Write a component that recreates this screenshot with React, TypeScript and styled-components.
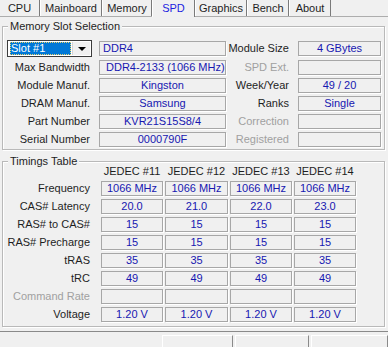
import React from 'react'
import styled, { createGlobalStyle } from 'styled-components'

const GlobalStyle = createGlobalStyle`
  html, body {
    margin: 0;
    padding: 0;
    background: #f0f0f0;
  }
  body {
    font-family: "Liberation Sans", Arial, sans-serif;
    font-size: 11px;
    color: #1e1e1e;
  }
`

const VALUE = '#1717b0'
const DIM = '#a0a0a0'

const tabs = [
  { name: 'CPU', width: 40 },
  { name: 'Mainboard', width: 62 },
  { name: 'Memory', width: 50 },
  { name: 'SPD', width: 43 },
  { name: 'Graphics', width: 52 },
  { name: 'Bench', width: 42 },
  { name: 'About', width: 42 },
]

const slotRows = [
  { label: 'Max Bandwidth', value: 'DDR4-2133 (1066 MHz)', align: 'left', pad: 6, rlabel: 'SPD Ext.', rdim: true, rvalue: '' },
  { label: 'Module Manuf.', value: 'Kingston', rlabel: 'Week/Year', rvalue: '49 / 20' },
  { label: 'DRAM Manuf.', value: 'Samsung', rlabel: 'Ranks', rvalue: 'Single' },
  { label: 'Part Number', value: 'KVR21S15S8/4', rlabel: 'Correction', rdim: true, rvalue: '' },
  { label: 'Serial Number', value: '0000790F', rlabel: 'Registered', rdim: true, rvalue: '' },
]

const timings = [
  { label: 'Frequency', values: ['1066 MHz', '1066 MHz', '1066 MHz', '1066 MHz'] },
  { label: 'CAS# Latency', values: ['20.0', '21.0', '22.0', '23.0'] },
  { label: 'RAS# to CAS#', values: ['15', '15', '15', '15'] },
  { label: 'RAS# Precharge', values: ['15', '15', '15', '15'] },
  { label: 'tRAS', values: ['35', '35', '35', '35'] },
  { label: 'tRC', values: ['49', '49', '49', '49'] },
  { label: 'Command Rate', dim: true, values: ['', '', '', ''] },
  { label: 'Voltage', values: ['1.20 V', '1.20 V', '1.20 V', '1.20 V'] },
]

function App() {
  return (
    <Window>
      <GlobalStyle />
      <TabBar>
        {tabs.map((t) => (
          <Tab key={t.name} $width={t.width} $active={t.name === 'SPD'}>
            {t.name}
          </Tab>
        ))}
      </TabBar>
      <Panel>
        <Group>
          <GroupTitle>Memory Slot Selection</GroupTitle>
          <SlotGrid>
            <Combo>
              <ComboValue>Slot #1</ComboValue>
              <ComboButton>
                <Arrow />
              </ComboButton>
            </Combo>
            <Field $align="left" $pad={3}>DDR4</Field>
            <Label>Module Size</Label>
            <Field>4 GBytes</Field>
            {slotRows.map((r) => (
              <React.Fragment key={r.label}>
                <Label>{r.label}</Label>
                <Field $align={r.align === 'left' ? 'left' : 'center'} $pad={r.pad}>
                  {r.value}
                </Field>
                <Label $dim={r.rdim}>{r.rlabel}</Label>
                <Field>{r.rvalue}</Field>
              </React.Fragment>
            ))}
          </SlotGrid>
        </Group>

        <Group $gap={11}>
          <GroupTitle>Timings Table</GroupTitle>
          <TimingGrid>
            <span />
            <ColHead>JEDEC #11</ColHead>
            <ColHead>JEDEC #12</ColHead>
            <ColHead>JEDEC #13</ColHead>
            <ColHead>JEDEC #14</ColHead>
            {timings.map((r) => (
              <React.Fragment key={r.label}>
                <Label $dim={r.dim}>{r.label}</Label>
                {r.values.map((v, i) => (
                  <Field key={i}>{v}</Field>
                ))}
              </React.Fragment>
            ))}
          </TimingGrid>
        </Group>
      </Panel>
      <Footer>
        <FootButton $width={74} />
        <FootButton $width={77} />
        <FootButton $width={80} />
      </Footer>
    </Window>
  )
}

export default App

const Window = styled.div`
  width: 388px;
  height: 347px;
  overflow: hidden;
  background: #f0f0f0;
  display: flex;
  flex-direction: column;
`

const TabBar = styled.div`
  display: flex;
  height: 16px;
  border-bottom: 1px solid #adadad;
`

const Tab = styled.div<{ $width: number; $active?: boolean }>`
  box-sizing: border-box;
  width: ${(p) => p.$width}px;
  height: ${(p) => (p.$active ? 17 : 16)}px;
  line-height: 16px;
  text-align: center;
  border-left: 1px solid #ffffff;
  border-right: 1px solid #7a7a7a;
  background: #f0f0f0;
  color: ${(p) => (p.$active ? '#1d1de0' : '#1e1e1e')};
  position: relative;
  z-index: ${(p) => (p.$active ? 1 : 0)};
  &:first-child {
    border-left: none;
  }
`

const Panel = styled.div`
  height: 324px;
  box-sizing: border-box;
  padding: 0 3px 0 2px;
  border-bottom: 1px solid #8a8a8a;
`

const Group = styled.div<{ $gap?: number }>`
  position: relative;
  margin-top: ${(p) => p.$gap ?? 9}px;
  border: 1px solid #b9b9b9;
  box-shadow: inset 1px 1px 0 #ffffff, 1px 1px 0 #ffffff;
`

const GroupTitle = styled.span`
  position: absolute;
  top: -7px;
  left: 5px;
  padding: 0 2px;
  line-height: 13px;
  background: #f0f0f0;
  color: #1e1e1e;
`

const SlotGrid = styled.div`
  display: grid;
  grid-template-columns: 96px 127px 72px 83px;
  grid-template-rows: 17px repeat(5, 15px);
  row-gap: 3px;
  padding: 13px 0 2px;
  & > :nth-child(-n + 4) {
    margin-bottom: 1px;
  }
`

const TimingGrid = styled.div`
  display: grid;
  grid-template-columns: 96px 62px 63px 62px 62px;
  grid-template-rows: 13px repeat(8, 15px);
  column-gap: 2px;
  row-gap: 3px;
  padding: 3px 0 4px;
  & > :nth-child(-n + 5) {
    margin-bottom: -1px;
  }
`

const Label = styled.div<{ $dim?: boolean }>`
  align-self: center;
  text-align: right;
  padding-right: 9px;
  line-height: 13px;
  white-space: nowrap;
  color: ${(p) => (p.$dim ? DIM : '#1e1e1e')};
`

const ColHead = styled.div`
  text-align: center;
  line-height: 13px;
  white-space: nowrap;
  color: #1e1e1e;
`

const Field = styled.div<{ $align?: 'left' | 'center'; $pad?: number }>`
  align-self: center;
  box-sizing: border-box;
  height: 15px;
  line-height: 13px;
  border: 1px solid #a7a7a7;
  box-shadow: 1px 1px 0 #ffffff;
  padding: 0 ${(p) => p.$pad ?? 2}px;
  text-align: ${(p) => p.$align ?? 'center'};
  white-space: nowrap;
  overflow: hidden;
  color: ${VALUE};
`

const Combo = styled.div`
  box-sizing: border-box;
  margin-left: 4px;
  width: 85px;
  height: 17px;
  border: 1px solid #3c3c3c;
  background: #ffffff;
  display: flex;
  align-items: stretch;
  padding: 1px;
`

const ComboValue = styled.div`
  flex: 1;
  margin-left: 1px;
  background: #0078d7;
  color: #ffffff;
  line-height: 13px;
  padding-left: 1px;
  outline: 1px dotted #e9d26b;
  outline-offset: -1px;
  white-space: nowrap;
`

const ComboButton = styled.div`
  width: 17px;
  margin-left: 1px;
  background: #f0f0f0;
  border-left: 1px solid #d4d4d4;
  display: flex;
  align-items: center;
  justify-content: center;
`

const Arrow = styled.span`
  width: 0;
  height: 0;
  border-left: 4px solid transparent;
  border-right: 4px solid transparent;
  border-top: 4px solid #000000;
  margin-top: 1px;
`

const Footer = styled.div`
  display: flex;
  padding: 3px 0 0 162px;
  gap: 2px;
`

const FootButton = styled.div<{ $width: number }>`
  width: ${(p) => p.$width}px;
  height: 12px;
  box-sizing: border-box;
  border-top: 1px solid #ffffff;
  border-left: 1px solid #ffffff;
  border-right: 1px solid #8a8a8a;
  background: #f0f0f0;
`
